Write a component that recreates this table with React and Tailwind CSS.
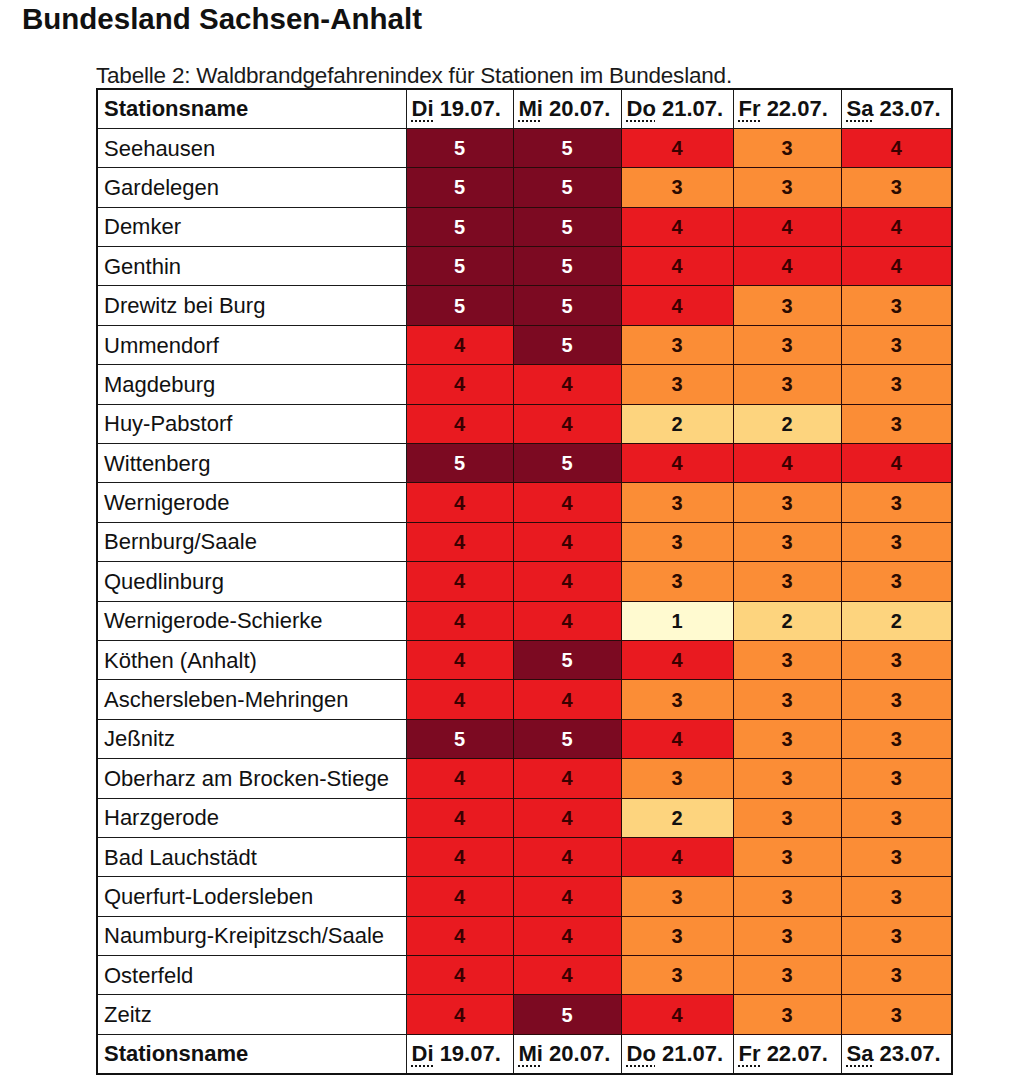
import React from "react";

const days = [
  ["Di", "19.07."],
  ["Mi", "20.07."],
  ["Do", "21.07."],
  ["Fr", "22.07."],
  ["Sa", "23.07."],
];

const rows = [
  ["Seehausen", [5, 5, 4, 3, 4]],
  ["Gardelegen", [5, 5, 3, 3, 3]],
  ["Demker", [5, 5, 4, 4, 4]],
  ["Genthin", [5, 5, 4, 4, 4]],
  ["Drewitz bei Burg", [5, 5, 4, 3, 3]],
  ["Ummendorf", [4, 5, 3, 3, 3]],
  ["Magdeburg", [4, 4, 3, 3, 3]],
  ["Huy-Pabstorf", [4, 4, 2, 2, 3]],
  ["Wittenberg", [5, 5, 4, 4, 4]],
  ["Wernigerode", [4, 4, 3, 3, 3]],
  ["Bernburg/Saale", [4, 4, 3, 3, 3]],
  ["Quedlinburg", [4, 4, 3, 3, 3]],
  ["Wernigerode-Schierke", [4, 4, 1, 2, 2]],
  ["Köthen (Anhalt)", [4, 5, 4, 3, 3]],
  ["Aschersleben-Mehringen", [4, 4, 3, 3, 3]],
  ["Jeßnitz", [5, 5, 4, 3, 3]],
  ["Oberharz am Brocken-Stiege", [4, 4, 3, 3, 3]],
  ["Harzgerode", [4, 4, 2, 3, 3]],
  ["Bad Lauchstädt", [4, 4, 4, 3, 3]],
  ["Querfurt-Lodersleben", [4, 4, 3, 3, 3]],
  ["Naumburg-Kreipitzsch/Saale", [4, 4, 3, 3, 3]],
  ["Osterfeld", [4, 4, 3, 3, 3]],
  ["Zeitz", [4, 5, 4, 3, 3]],
];

const levelClass = {
  1: "bg-[#fffad0] text-[#111]",
  2: "bg-[#fdd47e] text-[#111]",
  3: "bg-[#fb8d36] text-[#2a0a00]",
  4: "bg-[#e91a20] text-[#3a0000]",
  5: "bg-[#7c0a22] text-white",
};

function HeaderRow() {
  return (
    <tr className="h-[39.4px] bg-white">
      <th className="border border-[#1a1a1a] pl-[6px] text-left font-bold">Stationsname</th>
      {days.map(([d, date]) => (
        <th key={d} className="border border-[#1a1a1a] pl-[5px] text-left font-bold whitespace-nowrap">
          <abbr className="underline decoration-dotted decoration-2 underline-offset-4">{d}</abbr> {date}
        </th>
      ))}
    </tr>
  );
}

export default function App() {
  return (
    <div className="bg-white min-h-[1089px] text-[#111]" style={{ fontFamily: '"Liberation Sans", Arial, sans-serif' }}>
      <h1 className="pl-[22px] pt-[3px] text-[29.5px] font-bold leading-[32px]">Bundesland Sachsen-Anhalt</h1>
      <div className="pl-[96px] pt-[28px]">
        <p className="text-[22.5px] leading-[25px] text-[#1a1a1a] tracking-[-0.2px]">Tabelle 2: Waldbrandgefahrenindex für Stationen im Bundesland.</p>
        <table className="table-fixed border-collapse border-2 border-[#111] text-[22px] w-[855px]">
          <colgroup>
            <col className="w-[309px]" />
            <col className="w-[107px]" />
            <col className="w-[108px]" />
            <col className="w-[112px]" />
            <col className="w-[108px]" />
            <col className="w-[111px]" />
          </colgroup>
          <thead>
            <HeaderRow />
          </thead>
          <tbody>
            {rows.map(([name, vals]) => (
              <tr key={name} className="h-[39.4px]">
                <td className="border border-[#1a1a1a] bg-white pl-[6px] whitespace-nowrap">{name}</td>
                {vals.map((v, i) => (
                  <td key={i} className={`border border-[#2a0a0a] text-center text-[20px] font-bold ${levelClass[v]}`}>
                    {v}
                  </td>
                ))}
              </tr>
            ))}
          </tbody>
          <tfoot>
            <HeaderRow />
          </tfoot>
        </table>
      </div>
    </div>
  );
}
